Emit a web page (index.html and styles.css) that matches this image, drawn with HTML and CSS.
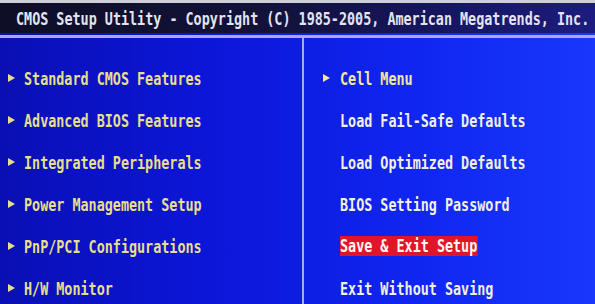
FILE: index.html
```html
<!DOCTYPE html>
<html lang="en">
<head>
    <meta charset="UTF-8">
    <meta name="viewport" content="width=device-width, initial-scale=1.0">
    <title>CMOS Setup Utility</title>
    <link rel="stylesheet" href="styles.css">
</head>
<body>
    <div class="screen">
        <header class="title-bar">
            <span class="txt">CMOS Setup Utility - Copyright (C) 1985-2005, American Megatrends, Inc.</span>
        </header>
        <div class="rule"></div>
        <main class="menu">
            <ul class="col col-left">
                <li><span class="arrow"></span><span class="txt">Standard CMOS Features</span></li>
                <li><span class="arrow"></span><span class="txt">Advanced BIOS Features</span></li>
                <li><span class="arrow"></span><span class="txt">Integrated Peripherals</span></li>
                <li><span class="arrow"></span><span class="txt">Power Management Setup</span></li>
                <li><span class="arrow"></span><span class="txt">PnP/PCI Configurations</span></li>
                <li><span class="arrow"></span><span class="txt">H/W Monitor</span></li>
            </ul>
            <ul class="col col-right">
                <li class="sub"><span class="arrow"></span><span class="txt">Cell Menu</span></li>
                <li><span class="arrow none"></span><span class="txt">Load Fail-Safe Defaults</span></li>
                <li><span class="arrow none"></span><span class="txt">Load Optimized Defaults</span></li>
                <li><span class="arrow none"></span><span class="txt">BIOS Setting Password</span></li>
                <li class="selected"><span class="arrow none"></span><span class="txt">Save &amp; Exit Setup</span></li>
                <li><span class="arrow none"></span><span class="txt">Exit Without Saving</span></li>
            </ul>
        </main>
    </div>
</body>
</html>
```

FILE: styles.css
```css
body {
    margin: 0;
    padding: 0;
    background-color: #0c18e0;
    font-family: "DejaVu Sans Mono", "Liberation Mono", monospace;
    font-weight: bold;
    font-size: 18px;
}

.screen {
    width: 595px;
    height: 304px;
    overflow: hidden;
    display: flex;
    flex-direction: column;
    background: linear-gradient(90deg, #0a0fb4 0%, #0c16d8 35%, #1026f0 70%, #1838fc 100%);
}

.txt {
    display: inline-block;
    transform: scaleX(0.745);
    transform-origin: left center;
    white-space: nowrap;
}

.title-bar {
    flex: none;
    height: 30px;
    border-top: 3px solid #cfcfd8;
    background: linear-gradient(90deg, #0e0e26 0%, #12123a 45%, #161660 75%, #1c1c80 100%);
    color: #e4e4f0;
    padding-left: 16px;
    display: flex;
    align-items: center;
}

.rule {
    flex: none;
    height: 3px;
    margin-top: 2px;
    background-color: #a8a8f4;
}

.menu {
    flex: 1;
    display: flex;
    min-height: 0;
}

.col {
    list-style: none;
    margin: 0;
    padding: 19px 0 0 0;
}

.col li {
    height: 42px;
    display: flex;
    align-items: center;
}

.col-left {
    width: 304px;
    border-right: 2px solid #a8a8f4;
    padding-left: 8px;
    box-sizing: border-box;
    color: #e8df8c;
}

.col-right {
    flex: 1;
    padding-left: 19px;
    color: #f2f0e2;
}

.arrow {
    width: 16px;
    flex: none;
    display: flex;
    align-items: center;
}

.arrow::before {
    content: "";
    border-left: 7px solid #e8df8c;
    border-top: 4.5px solid transparent;
    border-bottom: 4.5px solid transparent;
}

.col-right .arrow {
    width: 17px;
}

.arrow.none::before {
    display: none;
}

.col-right .sub {
    color: #f2ea98;
}

.col-right .sub .arrow::before {
    border-left-color: #f2ea98;
}

.selected .txt {
    background-color: #e0142a;
    color: #fff6f0;
    line-height: 20px;
    padding-right: 1px;
}
```
